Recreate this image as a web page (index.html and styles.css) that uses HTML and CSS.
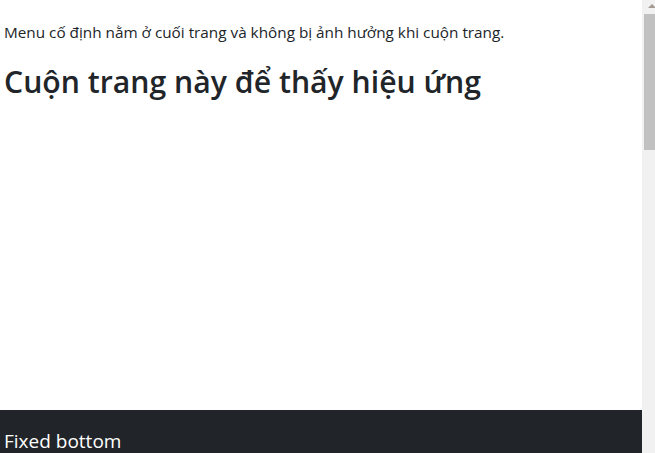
FILE: index.html
```html
<!DOCTYPE html>
<html lang="vi">
<head>
<meta charset="utf-8">
<title>Fixed bottom</title>
<link rel="stylesheet" href="styles.css">
</head>
<body>
<main class="page">
  <p class="note">Menu cố định nằm ở cuối trang và không bị ảnh hưởng khi cuộn trang.</p>
  <h1 class="title">Cuộn trang này để thấy hiệu ứng</h1>
</main>
<nav class="navbar">
  <span class="brand">Fixed bottom</span>
</nav>
<div class="scrollbar" aria-hidden="true">
  <span class="scroll-arrow"></span>
  <span class="scroll-thumb"></span>
</div>
</body>
</html>
```
FILE: styles.css
```css
html {
  overflow: hidden;
}
body {
  margin: 0;
  font-family: "Open Sans", "Noto Sans", sans-serif;
  color: #212529;
  background: #fff;
}
.page {
  padding: 20px 17px 0 4px;
  min-height: 1400px;
}
.note {
  margin: 0 0 19px;
  font-size: 15.3px;
  line-height: 24px;
}
.title {
  margin: 0;
  font-size: 30.2px;
  font-weight: 600;
  line-height: 38px;
}
.navbar {
  position: fixed;
  left: 0;
  right: 13px;
  bottom: -15px;
  height: 58px;
  box-sizing: border-box;
  padding: 10px 4px 6px;
  background: #212529;
  display: flex;
  align-items: center;
}
.brand {
  color: #fff;
  font-size: 19px;
  line-height: 30px;
}
.scrollbar {
  position: fixed;
  top: 0;
  right: 0;
  bottom: 0;
  width: 13px;
  background: #f1f1f1;
}
.scroll-arrow {
  position: absolute;
  top: 4px;
  left: 6px;
  width: 0;
  height: 0;
  border-left: 4px solid transparent;
  border-right: 4px solid transparent;
  border-bottom: 4px solid #a39a94;
}
.scroll-thumb {
  position: absolute;
  top: 14px;
  left: 2px;
  right: 0;
  height: 136px;
  background: #c1c1c1;
}
```
